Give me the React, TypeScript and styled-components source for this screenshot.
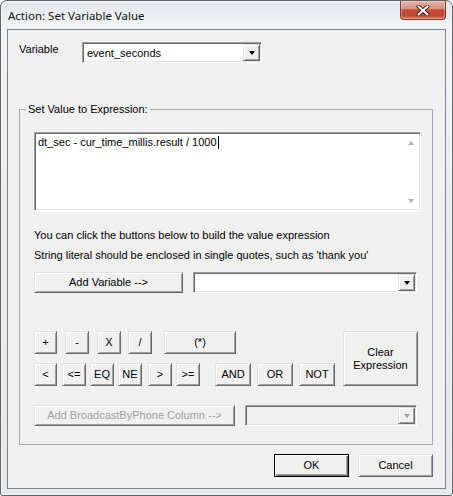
import React from "react";
import styled, { createGlobalStyle, css } from "styled-components";

const GlobalStyle = createGlobalStyle`
  html, body { margin: 0; padding: 0; background: #ffffff; }
  body {
    font-family: "Liberation Sans", Arial, sans-serif;
    font-size: 11px;
    color: #000;
  }
  * { box-sizing: border-box; }
`;

const raised = css`
  border: 1px solid;
  border-color: #e3e3e3 #696969 #696969 #e3e3e3;
  box-shadow: inset 1px 1px 0 #ffffff, inset -1px -1px 0 #a0a0a0;
  background: #f0f0f0;
`;

const sunken = css`
  border: 1px solid;
  border-color: #a0a0a0 #ffffff #ffffff #a0a0a0;
  box-shadow: inset 1px 1px 0 #696969, inset -1px -1px 0 #e3e3e3;
`;

const Window = styled.div`
  width: 453px;
  height: 496px;
  display: flex;
  flex-direction: column;
  padding: 0 6px 6px;
  border: 1px solid #5d6066;
  border-radius: 7px 7px 3px 3px;
  background: linear-gradient(180deg, #e2e6ea 0%, #f1f3f5 5%, #e9ecef 40%, #e6e8eb 100%);
  box-shadow: inset 1px 1px 0 rgba(255, 255, 255, 0.85), inset -1px -1px 0 rgba(255, 255, 255, 0.6);
`;

const TitleBar = styled.div`
  height: 28px;
  display: flex;
  align-items: center;
  justify-content: space-between;
`;

const Title = styled.span`
  margin-left: 1px;
  font-family: "Noto Sans", "Open Sans", sans-serif;
  font-size: 11.5px;
  color: #111;
  text-shadow: 0 0 6px rgba(255, 255, 255, 0.9);
`;

const CloseButton = styled.div`
  align-self: flex-start;
  width: 46px;
  height: 19px;
  display: flex;
  align-items: center;
  justify-content: center;
  border: 1px solid #8a3a2c;
  border-top: none;
  border-radius: 0 0 4px 4px;
  background: linear-gradient(180deg, #eab3a6 0%, #dc8f7c 42%, #c34a33 50%, #c0452e 78%, #d87a5e 100%);
  box-shadow: inset 0 0 0 1px rgba(255, 255, 255, 0.28);
`;

const Client = styled.div`
  flex: 1;
  display: flex;
  flex-direction: column;
  padding: 12px 12px 11px 11px;
  background: #f0f0f0;
  border: 1px solid #80848a;
`;

const VariableRow = styled.div`
  display: flex;
  align-items: flex-start;
`;

const FieldLabel = styled.span`
  width: 63px;
  margin-top: 1px;
  line-height: 13px;
`;

const Combo = styled.div<{ $w: number; $ml?: number; $disabled?: boolean }>`
  ${sunken};
  width: ${(p) => p.$w}px;
  height: 21px;
  margin-left: ${(p) => p.$ml ?? 0}px;
  display: flex;
  align-items: center;
  justify-content: space-between;
  padding: 0 1px 0 4px;
  background: ${(p) => (p.$disabled ? "#f0f0f0" : "#ffffff")};
`;

const DropButton = styled.div<{ $disabled?: boolean }>`
  ${raised};
  width: 17px;
  height: 17px;
  display: flex;
  align-items: center;
  justify-content: center;
  &::after {
    content: "";
    border-left: 3.5px solid transparent;
    border-right: 3.5px solid transparent;
    border-top: 4px solid ${(p) => (p.$disabled ? "#a0a0a0" : "#000000")};
  }
`;

const Group = styled.fieldset`
  margin: 40px 0 0;
  padding: 16px 11px 18px 14px;
  border: 1px solid #aaaaaa;
  display: flex;
  flex-direction: column;
  align-items: flex-start;
`;

const Legend = styled.legend`
  margin-left: -8px;
  padding: 0 2px;
  line-height: 13px;
`;

const ExprBox = styled.div`
  ${sunken};
  width: 387px;
  height: 79px;
  display: flex;
  background: #ffffff;
`;

const ExprText = styled.div`
  flex: 1;
  padding: 3px 3px;
  line-height: 13px;
`;

const Caret = styled.span`
  display: inline-block;
  width: 1px;
  height: 13px;
  margin-left: 1px;
  vertical-align: top;
  background: #000;
`;

const ScrollTrack = styled.div`
  width: 16px;
  margin: 2px 1px 1px 0;
  display: flex;
  flex-direction: column;
  justify-content: space-between;
`;

const ScrollArrow = styled.div<{ $down?: boolean }>`
  height: 16px;
  display: flex;
  align-items: center;
  justify-content: center;
  &::after {
    content: "";
    border-left: 3.5px solid transparent;
    border-right: 3.5px solid transparent;
    ${(p) =>
      p.$down
        ? "border-top: 4px solid #b4b4b4;"
        : "border-bottom: 4px solid #b4b4b4;"}
  }
`;

const Hint = styled.p`
  margin: 14px 0 0;
  line-height: 20px;
`;

const Row = styled.div<{ $mt: number }>`
  display: flex;
  align-items: flex-start;
  margin-top: ${(p) => p.$mt}px;
`;

const Btn = styled.button<{ $w: number; $h?: number; $ml?: number; $default?: boolean }>`
  ${raised};
  width: ${(p) => p.$w}px;
  height: ${(p) => p.$h ?? 23}px;
  margin-left: ${(p) => p.$ml ?? 0}px;
  padding: 0;
  font-family: "Liberation Sans", Arial, sans-serif;
  font-size: 11px;
  line-height: 13px;
  color: #000;
  text-align: center;
  &:disabled {
    color: #a0a0a0;
  }
  ${(p) =>
    p.$default &&
    css`
      border-color: #000;
      box-shadow: inset 1px 1px 0 #ffffff, inset -1px -1px 0 #696969, inset -2px -2px 0 #a0a0a0;
    `}
`;

const OperatorPad = styled.div`
  display: flex;
  flex-direction: column;
  gap: 9px;
`;

const Footer = styled.div`
  display: flex;
  justify-content: flex-end;
  gap: 9px;
  margin-top: 9px;
`;

const rowOne = [
  { t: "+", w: 23, ml: 0 },
  { t: "-", w: 24, ml: 8 },
  { t: "X", w: 24, ml: 8 },
  { t: "/", w: 24, ml: 7 },
  { t: "(*)", w: 72, ml: 12 },
];

const rowTwo = [
  { t: "<", w: 23, ml: 0 },
  { t: "<=", w: 24, ml: 5 },
  { t: "EQ", w: 24, ml: 4 },
  { t: "NE", w: 24, ml: 4 },
  { t: ">", w: 24, ml: 6 },
  { t: ">=", w: 24, ml: 4 },
  { t: "AND", w: 36, ml: 15 },
  { t: "OR", w: 36, ml: 6 },
  { t: "NOT", w: 36, ml: 6 },
];

const CloseGlyph = () => (
  <svg width="14" height="11" viewBox="0 0 14 11">
    <path d="M2.5 1.5 L11.5 9.5 M11.5 1.5 L2.5 9.5" stroke="#4a1f17" strokeWidth="4" strokeLinecap="round" />
    <path d="M2.5 1.5 L11.5 9.5 M11.5 1.5 L2.5 9.5" stroke="#ffffff" strokeWidth="2.2" strokeLinecap="round" />
  </svg>
);

export default function App() {
  return (
    <>
      <GlobalStyle />
      <Window>
        <TitleBar>
          <Title>Action: Set Variable Value</Title>
          <CloseButton>
            <CloseGlyph />
          </CloseButton>
        </TitleBar>
        <Client>
          <VariableRow>
            <FieldLabel>Variable</FieldLabel>
            <Combo $w={180}>
              <span>event_seconds</span>
              <DropButton />
            </Combo>
          </VariableRow>

          <Group>
            <Legend>Set Value to Expression:</Legend>
            <ExprBox>
              <ExprText>
                dt_sec - cur_time_millis.result / 1000
                <Caret />
              </ExprText>
              <ScrollTrack>
                <ScrollArrow />
                <ScrollArrow $down />
              </ScrollTrack>
            </ExprBox>

            <Hint>
              You can click the buttons below to build the value expression
              <br />
              String literal should be enclosed in single quotes, such as 'thank you'
            </Hint>

            <Row $mt={7}>
              <Btn $w={149} $h={21}>Add Variable --&gt;</Btn>
              <Combo $w={224} $ml={10}>
                <span />
                <DropButton />
              </Combo>
            </Row>

            <Row $mt={38}>
              <OperatorPad>
                <Row $mt={0}>
                  {rowOne.map((b) => (
                    <Btn key={b.t} $w={b.w} $ml={b.ml}>
                      {b.t}
                    </Btn>
                  ))}
                </Row>
                <Row $mt={0}>
                  {rowTwo.map((b) => (
                    <Btn key={b.t} $w={b.w} $ml={b.ml}>
                      {b.t}
                    </Btn>
                  ))}
                </Row>
              </OperatorPad>
              <Btn $w={75} $h={55} $ml={8}>
                Clear
                <br />
                Expression
              </Btn>
            </Row>

            <Row $mt={19}>
              <Btn $w={201} $h={21} disabled>
                Add BroadcastByPhone Column --&gt;
              </Btn>
              <Combo $w={172} $ml={10} $disabled>
                <span />
                <DropButton $disabled />
              </Combo>
            </Row>
          </Group>

          <Footer>
            <Btn $w={75} $default>OK</Btn>
            <Btn $w={75}>Cancel</Btn>
          </Footer>
        </Client>
      </Window>
    </>
  );
}
